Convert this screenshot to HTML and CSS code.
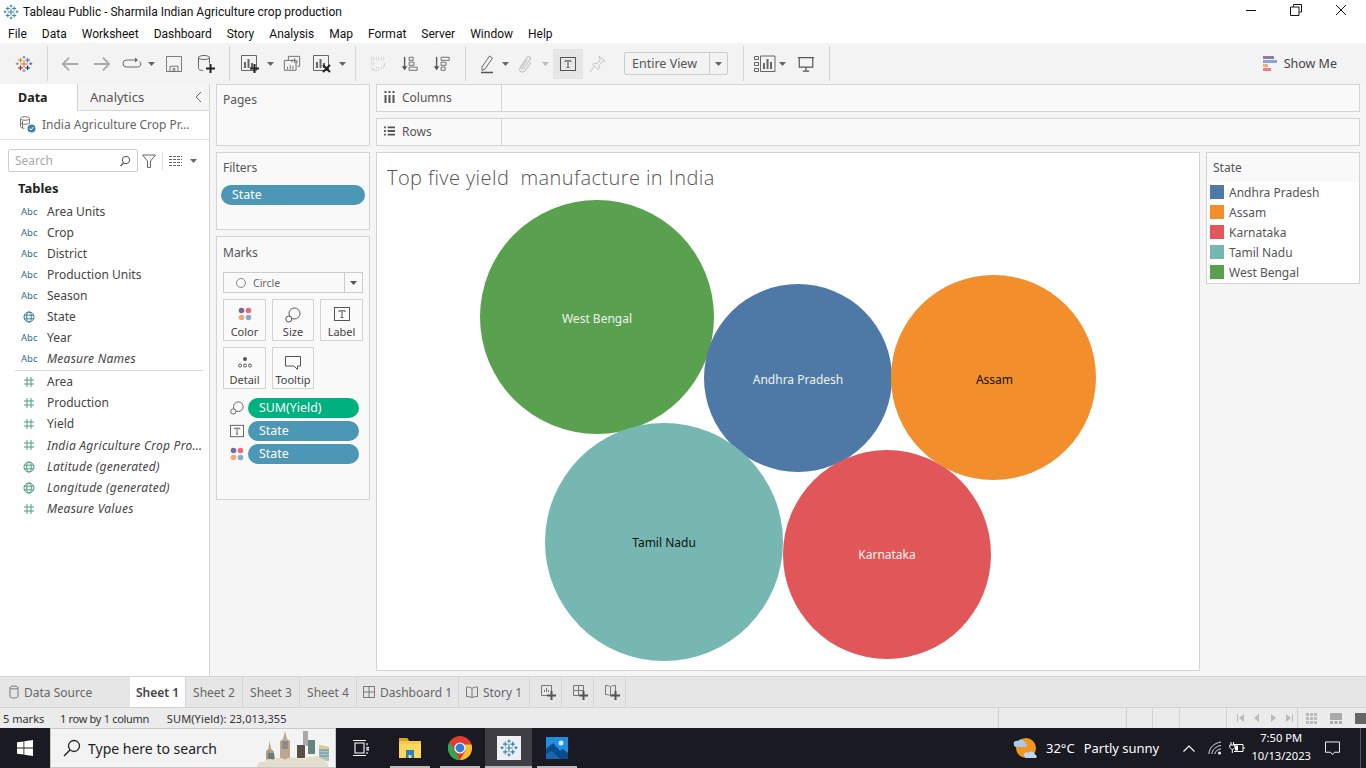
FILE: index.html
```html
<!DOCTYPE html>
<html lang="en">
<head>
<meta charset="utf-8">
<title>Tableau Public</title>
<link rel="stylesheet" href="styles.css">
</head>
<body>
<svg class="defs" width="0" height="0" aria-hidden="true">
  <defs>
    <symbol id="tlogo" viewBox="0 0 20 20"><g fill="none" stroke-width="1.300"><path d="M10 6v8M6 10h8" stroke="#e8762c"/><path d="M6 3.200v5M3.500 5.700h5" stroke="#e8862c" /><path d="M14 3.200v5M11.500 5.700h5" stroke="#59879b"/><path d="M6 11.800v5M3.500 14.300h5" stroke="#c72035"/><path d="M14 11.800v5M11.500 14.300h5" stroke="#1f447e"/><path d="M10 .8v3.400M8.300 2.500h3.400M10 15.800v3.400M8.300 17.500h3.400" stroke="#7099a6"/><path d="M2.500 8v3.400M.8 9.700h3.400" stroke="#7099a6"/><path d="M17.500 8v3.400M15.800 9.700h3.400" stroke="#5b6591"/></g></symbol>
    <symbol id="blogo" viewBox="0 0 20 20"><g fill="none" stroke="#3f86a8" stroke-width="1.300"><path d="M10 6v8M6 10h8M6 3.200v5M3.500 5.700h5M14 3.200v5M11.500 5.700h5M6 11.800v5M3.500 14.300h5M14 11.800v5M11.500 14.300h5M10 .8v3.400M8.300 2.500h3.400M10 15.800v3.400M8.300 17.500h3.400M2.500 8v3.400M.8 9.700h3.400M17.500 8v3.400M15.800 9.700h3.400"/></g></symbol>
    <symbol id="hash" viewBox="0 0 12 12"><path d="M4 1v10M8 1v10M1 4h10M1 8h10" fill="none" stroke="#4d9e80" stroke-width="1"/></symbol>
    <symbol id="globe" viewBox="0 0 12 12"><g fill="none" stroke="currentColor"><circle cx="6" cy="6" r="5"/><ellipse cx="6" cy="6" rx="2.300" ry="5"/><path d="M1 4.200h10M1 7.800h10"/></g></symbol>
    <symbol id="tbox" viewBox="0 0 16 14"><rect x=".5" y=".5" width="15" height="13" fill="none" stroke="#555"/><path d="M5 5V3.800h6V5M8 3.800v6.700M6.700 10.500h2.600" fill="none" stroke="#555"/></symbol>
    <symbol id="size" viewBox="0 0 16 16"><g fill="none" stroke="#555"><circle cx="9.500" cy="6.500" r="5.500"/><circle cx="3.800" cy="12" r="3" fill="#fafafa"/></g></symbol>
    <symbol id="dots" viewBox="0 0 14 14"><circle cx="3.500" cy="3.500" r="2.800" fill="#7a6a96"/><circle cx="10.500" cy="3.500" r="2.800" fill="#ef6a7a"/><circle cx="3.500" cy="10.500" r="2.800" fill="#f2a873"/><circle cx="10.500" cy="10.500" r="2.800" fill="#8aa9d0"/></symbol>
    <symbol id="caret" viewBox="0 0 8 4"><path d="M0 0h7L3.500 4z" fill="currentColor"/></symbol>
    <symbol id="plus" viewBox="0 0 9 9"><path d="M4.500 0v9M0 4.500h9" stroke="currentColor" stroke-width="2"/></symbol>
  </defs>
</svg>

<div class="window">
  <header class="titlebar">
    <svg class="title-logo"><use href="#blogo"/></svg>
    <span class="title-text">Tableau Public - Sharmila Indian Agriculture crop production</span>
    <div class="win-controls">
      <svg class="winbtn" viewBox="0 0 12 12"><path d="M1 6.500h10" stroke="#111"/></svg>
      <svg class="winbtn" viewBox="0 0 12 12"><path d="M3.500 2.500V.5h8v7.500h-2M.5 3h8.500v8.500H.5z" fill="none" stroke="#111"/></svg>
      <svg class="winbtn" viewBox="0 0 12 12"><path d="M1 1l10 10M11 1L1 11" stroke="#111"/></svg>
    </div>
  </header>
  <nav class="menubar">
    <span>File</span><span>Data</span><span>Worksheet</span><span>Dashboard</span><span>Story</span><span>Analysis</span><span>Map</span><span>Format</span><span>Server</span><span>Window</span><span>Help</span>
  </nav>

  <div class="toolbar">
    <div class="tb s47"><svg class="i18"><use href="#tlogo"/></svg></div>
    <i class="sep"></i>
    <div class="tb s6"></div>
    <div class="tb s32"><svg class="i18" viewBox="0 0 20 20"><path d="M19 10H2M9 3l-7 7 7 7" fill="none" stroke="#aaa" stroke-width="2"/></svg></div>
    <div class="tb s32"><svg class="i18" viewBox="0 0 20 20"><path d="M1 10h17M11 3l7 7-7 7" fill="none" stroke="#aaa" stroke-width="2"/></svg></div>
    <div class="tb s28"><svg class="i20" viewBox="0 0 20 20"><path d="M13 6H4.500a3 3 0 0 0 0 7h11a3 3 0 0 0 2-5.500" fill="none" stroke="#666"/><path d="M13 3.500L16 6l-3 2.500z" fill="#666"/></svg></div>
    <div class="tb s12 car"><svg class="c8"><use href="#caret"/></svg></div>
    <div class="tb s32"><svg class="i16" viewBox="0 0 18 18"><path d="M.5.5h17v17H.5zM4.500 17.500v-6h9v6M8 14h2v3.500H8z" fill="none" stroke="#666"/></svg></div>
    <div class="tb s32"><svg class="i20" viewBox="0 0 20 20"><g fill="none" stroke="#666"><ellipse cx="8" cy="3.500" rx="5.500" ry="2"/><path d="M2.500 3.500v11c0 1.200 2 2 4.500 2M13.500 3.500v6"/></g><use href="#plus" x="10" y="10" width="9" height="9" color="#222"/></svg></div>
    <div class="tb s7"></div>
    <i class="sep"></i>
    <div class="tb s7"></div>
    <div class="tb s26"><svg class="i20" viewBox="0 0 20 20"><path d="M1.500 1.500h15v15h-15z" fill="none" stroke="#666"/><path d="M5 8v6M8.500 5v9M12 9v5" stroke="#666" stroke-width="2"/><use href="#plus" x="10" y="10" width="9" height="9" color="#222"/></svg></div>
    <div class="tb s15 car"><svg class="c8"><use href="#caret"/></svg></div>
    <div class="tb s27"><svg class="i18" viewBox="0 0 20 20"><g fill="none" stroke="#666"><path d="M6 1.500h12.500v11H16M6 1.500V6"/><path d="M1.500 6h13v11h-13z" fill="#f3f3f3"/><path d="M5 13v3M8 11v5M11 12v4M10 8V5M13 9V3.500M15.500 9V6"/></g></svg></div>
    <div class="tb s34"><svg class="i20" viewBox="0 0 20 20"><path d="M1.500 1.500h15v15h-15z" fill="none" stroke="#666"/><path d="M5 8v6M8.500 5v9M12 9v5" stroke="#666" stroke-width="2"/><path d="M11 11l7 7M18 11l-7 7" stroke="#222" stroke-width="2"/></svg></div>
    <div class="tb s7 car"><svg class="c8"><use href="#caret"/></svg></div>
    <div class="tb s9"></div>
    <i class="sep"></i>
    <div class="tb s5"></div>
    <div class="tb s33"><svg class="i18" viewBox="0 0 20 20"><g fill="none" stroke="#c4c4c4"><path d="M2.500 2.500h3v3h-3zM8 2.500h3v3H8zM13.500 2.500h3v3h-3zM2.500 8h3v3h-3zM8 14h3v3H8z" stroke-dasharray="1 1"/><path d="M2.500 14c1 2.500 3 3 5 3M17.500 9c0 3-1.500 5-4.500 6"/></g></svg></div>
    <div class="tb s32"><svg class="i18" viewBox="0 0 20 20"><path d="M4 2v14" stroke="#555" stroke-width="1.500"/><path d="M1 12.500L4 17l3-4.500z" fill="#555"/><path d="M9 2.500h4.500v3.500H9zM9 8h5.500v3.500H9zM9 13.500h9V17H9z" fill="none" stroke="#666"/></svg></div>
    <div class="tb s32"><svg class="i18" viewBox="0 0 20 20"><path d="M4 2v14" stroke="#555" stroke-width="1.500"/><path d="M1 12.500L4 17l3-4.500z" fill="#555"/><path d="M9 2.500h9V6H9zM9 8h5.500v3.500H9zM9 13.500h4.500V17H9z" fill="none" stroke="#666"/></svg></div>
    <div class="tb s7"></div>
    <i class="sep"></i>
    <div class="tb s8"></div>
    <div class="tb s28"><svg class="i20" viewBox="0 0 20 20"><path d="M4 13L11.500 2l3 2L7 15l-3 1.500z" fill="none" stroke="#666"/><path d="M3 18.500h12" stroke="#555" stroke-width="1.500"/></svg></div>
    <div class="tb s7 car"><svg class="c8"><use href="#caret"/></svg></div>
    <div class="tb s33"><svg class="i20" viewBox="0 0 20 20"><path d="M5 12l6-8.500c1.500-2 4.500 0 3 2.200L8 14.500c-1 1.300-2.700 0-1.800-1.400l5-7.500" fill="none" stroke="#c4c4c4" stroke-width="1.200"/><path d="M5 12c-2 3-1.500 5.500.5 6s3.500-1 4.500-2.500l5-7" fill="none" stroke="#c4c4c4" stroke-width="1.200"/></svg></div>
    <div class="tb s7 car off"><svg class="c8"><use href="#caret"/></svg></div>
    <div class="tb s4"></div>
    <div class="tb s30 active"><svg class="i18-w"><use href="#tbox"/></svg></div>
    <div class="tb s28"><svg class="i20" viewBox="0 0 20 20"><path d="M12 2l6 5-2.500.5-3.500 4 .3 3-1 1-5.500-5 1-1 3 .3 3.500-4zM7.500 12L3 18" fill="none" stroke="#c4c4c4"/></svg></div>
    <div class="tb s13"></div>
    <div class="combo"><span class="combo-label">Entire View</span><span class="combo-arrow"><svg class="c8"><use href="#caret"/></svg></span></div>
    <div class="tb s15"></div>
    <i class="sep"></i>
    <div class="tb s7"></div>
    <div class="tb s28"><svg class="i20-w" viewBox="0 0 22 18"><g fill="none" stroke="#666"><path d="M.5 1.500h4v3h-4zM.5 7.500h4v3h-4zM.5 13.500h4v3h-4zM6.500 1h14.500v15.500H6.500z"/></g><path d="M10 8v6M13.500 4v10M17 7v7" stroke="#666" stroke-width="2"/></svg></div>
    <div class="tb s8 car"><svg class="c8"><use href="#caret"/></svg></div>
    <div class="tb s37"><svg class="i18" viewBox="0 0 20 20"><path d="M1 3h18M2.500 3v10.500h15V3M10 13.500V18M6.500 18h7" fill="none" stroke="#555" stroke-width="1.300"/></svg></div>
    <div class="tb s5"></div>
    <i class="sep"></i>
    <div class="showme">
      <svg class="showme-icon" viewBox="0 0 14 15"><rect width="11" height="3" fill="#8e7ba0"/><rect y="4" width="14" height="3" fill="#86a8cc"/><rect y="8" width="5" height="3" fill="#f4ab76"/><rect y="12" width="8" height="3" fill="#f47a86"/></svg>
      <span>Show Me</span>
    </div>
  </div>

  <main class="workspace">
    <aside class="datapane">
      <div class="pane-tabs">
        <div class="pane-tab on">Data</div>
        <div class="pane-tab off">Analytics<svg class="collapse" viewBox="0 0 7 12"><path d="M6 1L1 6l5 5" fill="none" stroke="#666"/></svg></div>
      </div>
      <div class="source">
        <svg class="source-icon" viewBox="0 0 17 17"><g fill="none" stroke="#777"><ellipse cx="6" cy="2.500" rx="4.500" ry="1.800"/><path d="M1.500 2.500v8c0 1 2 1.800 4 1.800M10.500 2.500v5M3.500 5v7M1.500 6.500c0 1 2 1.800 4.500 1.800s4.500-.8 4.500-1.800"/></g><circle cx="12.500" cy="12.500" r="4" fill="#3c84a8"/><path d="M10.500 12.500l1.500 1.500 2.500-3" fill="none" stroke="#fff"/></svg>
        <span>India Agriculture Crop Pr...</span>
      </div>
      <div class="searchrow">
        <div class="search"><span>Search</span><svg class="i12" viewBox="0 0 12 12"><circle cx="7" cy="5" r="3.700" fill="none" stroke="#555"/><path d="M4.500 8L1.500 11" stroke="#555" stroke-width="1.300"/></svg></div>
        <svg class="filter-icon" viewBox="0 0 14 14"><path d="M.5 1h13L8.500 7v6.500h-3V7z" fill="none" stroke="#666"/></svg>
        <i class="mini-sep"></i>
        <svg class="grid-icon" viewBox="0 0 13 10"><path d="M0 .5h13M0 3.500h13M0 6.500h13M0 9.500h13" stroke="#666" stroke-dasharray="3 1"/></svg>
        <svg class="c8 grid-caret"><use href="#caret"/></svg>
      </div>
      <div class="tables-h">Tables</div>
      <ul class="fields">
        <li><b class="abc">Abc</b>Area Units</li>
        <li><b class="abc">Abc</b>Crop</li>
        <li><b class="abc">Abc</b>District</li>
        <li><b class="abc">Abc</b>Production Units</li>
        <li><b class="abc">Abc</b>Season</li>
        <li><svg class="fld blue"><use href="#globe"/></svg>State</li>
        <li><b class="abc">Abc</b>Year</li>
        <li class="it"><b class="abc">Abc</b>Measure Names</li>
      </ul>
      <ul class="fields measures">
        <li><svg class="fld"><use href="#hash"/></svg>Area</li>
        <li><svg class="fld"><use href="#hash"/></svg>Production</li>
        <li><svg class="fld"><use href="#hash"/></svg>Yield</li>
        <li class="it"><svg class="fld"><use href="#hash"/></svg>India Agriculture Crop Pro...</li>
        <li class="it"><svg class="fld green"><use href="#globe"/></svg>Latitude (generated)</li>
        <li class="it"><svg class="fld green"><use href="#globe"/></svg>Longitude (generated)</li>
        <li class="it"><svg class="fld"><use href="#hash"/></svg>Measure Values</li>
      </ul>
    </aside>

    <section class="cards-col">
      <div class="card pages"><h3>Pages</h3></div>
      <div class="card filters"><h3>Filters</h3><div class="pill blue-pill wide">State</div></div>
      <div class="card marks">
        <h3>Marks</h3>
        <div class="mark-select">
          <span class="ring"></span><span class="mark-name">Circle</span>
          <span class="mark-arrow"><svg class="c8"><use href="#caret"/></svg></span>
        </div>
        <div class="mark-grid">
          <div class="mbtn"><svg class="i14"><use href="#dots"/></svg><span>Color</span></div>
          <div class="mbtn"><svg class="i16"><use href="#size"/></svg><span>Size</span></div>
          <div class="mbtn"><svg class="i18-w"><use href="#tbox"/></svg><span>Label</span></div>
          <div class="mbtn"><svg class="i14" viewBox="0 0 14 14"><circle cx="7" cy="4" r="2" fill="#555"/><g fill="none" stroke="#555"><circle cx="2" cy="10.500" r="1.500"/><circle cx="7" cy="10.500" r="1.500"/><circle cx="12" cy="10.500" r="1.500"/></g></svg><span>Detail</span></div>
          <div class="mbtn"><svg class="i16" viewBox="0 0 16 16"><path d="M.5 1.500h15v9.500h-3v3.500L9 11H.5z" fill="none" stroke="#555"/></svg><span>Tooltip</span></div>
        </div>
        <div class="enc"><svg class="i14"><use href="#size"/></svg><div class="pill green-pill">SUM(Yield)</div></div>
        <div class="enc"><svg class="i14"><use href="#tbox"/></svg><div class="pill blue-pill">State</div></div>
        <div class="enc"><svg class="i14"><use href="#dots"/></svg><div class="pill blue-pill">State</div></div>
      </div>
    </section>

    <section class="view">
      <div class="shelf"><div class="shelf-label"><svg class="shelf-icon" viewBox="0 0 11 12"><path d="M1.500 0v2M5.500 0v2M9.500 0v2" stroke="#555" stroke-width="2"/><path d="M1.500 4v8M5.500 4v8M9.500 4v8" stroke="#555" stroke-width="2"/></svg>Columns</div></div>
      <div class="shelf"><div class="shelf-label"><svg class="shelf-icon" viewBox="0 0 12 11"><path d="M0 1.500h2M0 5.500h2M0 9.500h2M4 1.500h8M4 5.500h8M4 9.500h8" stroke="#555" stroke-width="2"/></svg>Rows</div></div>
      <div class="viz-row">
        <div class="viz">
          <h1 class="viz-title">Top five yield  manufacture in India</h1>
          <div class="bubble wb">West Bengal</div>
          <div class="bubble ap">Andhra Pradesh</div>
          <div class="bubble as">Assam</div>
          <div class="bubble tn">Tamil Nadu</div>
          <div class="bubble ka">Karnataka</div>
        </div>
        <aside class="legend">
          <div class="legend-h">State</div>
          <ul>
            <li><i class="sw c-ap"></i>Andhra Pradesh</li>
            <li><i class="sw c-as"></i>Assam</li>
            <li><i class="sw c-ka"></i>Karnataka</li>
            <li><i class="sw c-tn"></i>Tamil Nadu</li>
            <li><i class="sw c-wb"></i>West Bengal</li>
          </ul>
        </aside>
      </div>
    </section>
  </main>

  <div class="tabs">
    <div class="tab ds"><svg class="tab-i" viewBox="0 0 10 14"><g fill="none" stroke="#777"><ellipse cx="5" cy="2.500" rx="4" ry="1.500"/><path d="M1 2.500v9c0 .8 1.800 1.500 4 1.500s4-.7 4-1.500v-9"/></g></svg>Data Source</div>
    <div class="tab cur t56">Sheet 1</div>
    <div class="tab t57">Sheet 2</div>
    <div class="tab t57">Sheet 3</div>
    <div class="tab t57">Sheet 4</div>
    <div class="tab t102"><svg class="tab-i w12" viewBox="0 0 12 12"><path d="M.5.5h11v11H.5zM6 .5v11M.5 6h11" fill="none" stroke="#777"/></svg>Dashboard 1</div>
    <div class="tab t71"><svg class="tab-i w12" viewBox="0 0 12 12"><path d="M6 2.500C5 1.500 3 1 .5 1v9.500c2.500 0 4.500.5 5.500 1.500 1-1 3-1.500 5.500-1.500V1C9 1 7 1.500 6 2.500zM6 2.500V12" fill="none" stroke="#777"/></svg>Story 1</div>
    <div class="tab t32"><svg class="add-i" viewBox="0 0 15 15"><path d="M.5.5h10v10H.5z" fill="none" stroke="#777"/><path d="M3.500 7V5M5.500 7V3M7.500 7V5" stroke="#777"/><use href="#plus" x="6" y="6" width="9" height="9" color="#555"/></svg></div>
    <div class="tab t32"><svg class="add-i" viewBox="0 0 15 15"><path d="M.5.5h10v10H.5zM5.500.5v10M.5 5.500h10" fill="none" stroke="#777"/><use href="#plus" x="6" y="6" width="9" height="9" color="#555"/></svg></div>
    <div class="tab t32"><svg class="add-i" viewBox="0 0 15 15"><path d="M5.500 2C4.500 1 3 .5.500.5v9c2.500 0 4 .5 5 1.500 1-1 2.500-1.500 5-1.500v-9C8 .5 6.500 1 5.500 2zM5.500 2v9" fill="none" stroke="#777"/><use href="#plus" x="6" y="6" width="9" height="9" color="#555"/></svg></div>
  </div>

  <footer class="status">
    <span class="st1">5 marks</span><span class="st2">1 row by 1 column</span><span class="st3">SUM(Yield): 23,013,355</span>
    <i class="st-sep first"></i><i class="st-sep s128"></i><i class="st-sep s26w"></i><i class="st-sep s27w"></i><i class="st-sep s47w"></i>
    <div class="nav">
      <svg class="nav-i" viewBox="0 0 8 8"><path d="M7 0v8L2 4zM0 0h1v8H0z" fill="#bbb"/></svg>
      <svg class="nav-i" viewBox="0 0 8 8"><path d="M6 0v8L1 4z" fill="#bbb"/></svg>
      <svg class="nav-i" viewBox="0 0 8 8"><path d="M2 0v8l5-4z" fill="#bbb"/></svg>
      <svg class="nav-i" viewBox="0 0 8 8"><path d="M1 0v8l5-4zM7 0h1v8H7z" fill="#bbb"/></svg>
    </div>
    <i class="st-sep nav-end"></i>
    <div class="views">
      <svg class="view-i" viewBox="0 0 11 11"><path d="M0 0h3v3H0zM4 0h3v3H4zM8 0h3v3H8zM0 4h3v3H0zM4 4h3v3H4zM8 4h3v3H8zM0 8h3v3H0zM4 8h3v3H4zM8 8h3v3H8z" fill="#bbb"/></svg>
      <svg class="view-i w12" viewBox="0 0 12 11"><path d="M0 0h12v7H0zM0 8h3v3H0zM4.500 8h3v3h-3zM9 8h3v3H9z" fill="#aaa"/></svg>
      <svg class="view-i" viewBox="0 0 11 11"><path d="M0 0h11v11H0z" fill="#666"/></svg>
    </div>
  </footer>

  <div class="taskbar">
    <div class="start"><svg class="win-logo" viewBox="0 0 16 16"><path d="M0 2.300l6.500-.9v6.200H0zM7.300 1.300L16 0v7.600H7.300zM0 8.400h6.500v6.200L0 13.700zM7.300 8.400H16V16l-8.700-1.200z" fill="#fff"/></svg></div>
    <div class="tsearch">
      <svg class="ts-i" viewBox="0 0 18 18"><circle cx="11" cy="7" r="5.500" fill="none" stroke="#222" stroke-width="1.300"/><path d="M7 11l-6 6" stroke="#222" stroke-width="1.500"/></svg>
      <span>Type here to search</span>
      <svg class="skyline" viewBox="0 0 86 40">
        <path d="M17 33V24l2.500-2 1-8 1.500 8 2.500 2 2 9z" fill="#b89a7c"/><path d="M19 26h6v6h-6z" fill="#5f7f80"/>
        <path d="M31 34V14l3-2 2-8 2 8 3 2v20z" fill="#bba78f"/><path d="M33 14h6v8h-6z" fill="#8f8a84"/>
        <path d="M48 31V18h8v13z" fill="#5a4f47"/>
        <path d="M54 18V4h5v15z" fill="#a9a9a9"/>
        <path d="M59 27V13h7v14z" fill="#64857c"/>
        <path d="M70 34V18l10 2v14z" fill="#a9c4c4"/><path d="M70 23h10M70 26h10M70 29h10" stroke="#6e8f92"/><path d="M70 18l10 2v2H70z" fill="#e2c98f"/>
        <path d="M8 40c0-4 4-6 7-5 2-3 6-4 9-2 3-3 9-3 12 0 3-3 9-3 12-1 3-1 5-1 7 1 2-3 6-4 9-3 3-2 7-1 9 2 3 0 6 2 6 8z" fill="#e4dccd"/>
      </svg>
    </div>
    <div class="tk w48"><svg class="tv-i" viewBox="0 0 16 16"><path d="M2 3h9v10H2zM0 .5h13M0 15.500h13M14 3v2.500M14 7.500h2V10h-2zM14 12v2" fill="none" stroke="#fff" stroke-width="1.100"/></svg></div>
    <div class="tk app"><svg class="app-i" viewBox="0 0 22 22"><path d="M0 1h8l2 3h12v17H0z" fill="#f2c94c"/><path d="M0 7h22v14H0z" fill="#fbd75b"/><path d="M7 13h8v8h-2.500v-3h-3v3H7z" fill="#2a7fc1"/><path d="M0 1h8l2 3H0z" fill="#d9a520"/></svg></div>
    <div class="tk app"><svg class="app-i big" viewBox="0 0 24 24"><circle cx="12" cy="12" r="12" fill="#e33b2e"/><path d="M12 24A12 12 0 0 1 1.600 6L8 17l4 7z" fill="#2da94f"/><path d="M23.500 8.500A12 12 0 0 1 12 24l5.500-9.500-1-6z" fill="#fbc02d"/><circle cx="12" cy="12" r="5.600" fill="#fff"/><circle cx="12" cy="12" r="4.400" fill="#2f7de1"/></svg></div>
    <div class="tk app cur-app"><svg class="tab-tile" viewBox="0 0 26 26"><rect width="26" height="26" fill="#eef1f4"/><svg x="3" y="3" width="20" height="20"><use href="#blogo"/></svg></svg></div>
    <div class="tk app"><svg class="app-i" viewBox="0 0 22 22"><rect width="22" height="22" fill="#1f8fe0"/><path d="M0 22V12l7-6 7 8 3-2 5 4v6z" fill="#0d4a8a"/><path d="M0 22v-5l6-3 8 8z" fill="#1668b0"/><circle cx="15" cy="6" r="2.500" fill="#cfe9ff"/></svg></div>
    <div class="tray">
      <svg class="weather" viewBox="0 0 26 24"><circle cx="14" cy="12" r="10" fill="#f0951e"/><path d="M2 9a3 3 0 0 1 4-4 4 4 0 0 1 7 2 2 2 0 0 1 0 4H4a2 2 0 0 1-2-2z" fill="#a9cbea"/><path d="M13 21a2.500 2.500 0 0 1 3-4 4 4 0 0 1 7 1.500 2 2 0 0 1 1 3.500H14a2 2 0 0 1-1-1z" fill="#bcd8f0"/></svg>
      <span class="temp">32°C</span><span class="cond">Partly sunny</span>
      <svg class="chev" viewBox="0 0 12 7"><path d="M.5 6.500L6 1l5.500 5.500" fill="none" stroke="#fff" stroke-width="1.100"/></svg>
      <svg class="wifi" viewBox="0 0 14 14"><g fill="none" stroke="#ddd"><path d="M1 13C1 7 6 2 13 1M4 13c0-4 4-8 9-8.500M7 13c0-2.500 3-5 6-5"/></g><circle cx="11.500" cy="12" r="1.500" fill="#fff"/></svg>
      <svg class="batt" viewBox="0 0 16 12"><path d="M5 2.500h9v7H5M15 5v2" fill="none" stroke="#fff"/><path d="M2 0v3M4.500 0v3M.8 3h5v2.500l-2 2h-1l-2-2zM3.300 7.500V11" fill="none" stroke="#fff"/><path d="M6 3.500h3v5H6z" fill="#fff"/></svg>
      <div class="clock"><span>7:50 PM</span><span>10/13/2023</span></div>
      <svg class="notif" viewBox="0 0 16 15"><path d="M.5.5h15v11H10l-2 2.500-2-2.500H.5z" fill="none" stroke="#fff"/></svg>
      <i class="desk"></i>
    </div>
  </div>
</div>
</body>
</html>
```

FILE: styles.css
```css
* { box-sizing: border-box; }
html, body { margin: 0; padding: 0; }
body { width: 1366px; height: 768px; overflow: hidden; font-family: "Noto Sans", "Open Sans", sans-serif; font-size: 12px; color: #333; background: #fff; }
ul { list-style: none; margin: 0; padding: 0; }
h1, h3 { margin: 0; font-weight: 400; }
.defs { position: absolute; }
svg { display: block; flex: none; }
.window { display: flex; flex-direction: column; width: 1366px; height: 768px; }

.titlebar { height: 23px; display: flex; align-items: center; background: #fff; padding-left: 3px; }
.title-logo { width: 16px; height: 16px; margin-right: 4px; }
.title-text { font-family: Roboto, sans-serif; font-size: 12px; color: #111; }
.win-controls { margin-left: auto; display: flex; margin-top: -3px; }
.winbtn { width: 12px; height: 12px; margin-left: 33px; }
.win-controls .winbtn:last-child { margin-right: 19px; }
.menubar { height: 20px; display: flex; align-items: center; gap: 15px; padding: 1px 0 0 8px; background: #fff; color: #111; font-family: Roboto, sans-serif; font-size: 12px; }

.toolbar { height: 41px; display: flex; align-items: center; background: #f3f3f3; }
.tb { height: 30px; display: flex; align-items: center; justify-content: center; flex: none; }
.sep { width: 1px; height: 35px; background: #d4d4d4; flex: none; }
.car { color: #666; }
.car.off { color: #bbb; }
.s4 { width: 4px; } .s5 { width: 5px; } .s6 { width: 6px; } .s7 { width: 7px; } .s8 { width: 8px; } .s9 { width: 9px; } .s12 { width: 12px; } .s13 { width: 13px; } .s15 { width: 15px; }
.s26 { width: 26px; } .s27 { width: 27px; } .s28 { width: 28px; } .s30 { width: 30px; } .s32 { width: 32px; } .s33 { width: 33px; } .s34 { width: 34px; } .s37 { width: 37px; } .s47 { width: 47px; }
.i12 { width: 12px; height: 12px; } .i14 { width: 14px; height: 14px; } .i16 { width: 16px; height: 16px; } .i18 { width: 18px; height: 18px; }
.i20 { width: 20px; height: 20px; } .i20-w { width: 22px; height: 18px; } .i18-w { width: 16px; height: 14px; }
.c8 { width: 8px; height: 4px; }
.active { background: #e6e6e6; }
.combo { width: 104px; height: 23px; display: flex; border: 1px solid #ccc; border-radius: 2px; background: #f3f3f3; color: #555; font-size: 12.500px; flex: none; }
.combo-label { flex: 1; display: flex; align-items: center; padding-left: 7px; }
.combo-arrow { width: 18px; border-left: 1px solid #ccc; display: flex; align-items: center; justify-content: center; color: #666; }
.showme { margin-left: auto; margin-right: 29px; display: flex; align-items: center; gap: 7px; font-size: 12.500px; color: #444; }
.showme-icon { width: 14px; height: 15px; }

.workspace { height: 593px; display: flex; background: #f5f5f5; border-bottom: 1px solid #d4d4d4; }
.datapane { width: 210px; background: #fff; border-right: 1px solid #d4d4d4; flex: none; }
.pane-tabs { display: flex; height: 27px; }
.pane-tab { display: flex; align-items: center; font-size: 12.500px; }
.pane-tab.on { width: 77px; font-weight: 700; padding-left: 18px; color: #222; }
.pane-tab.off { flex: 1; padding-left: 12px; background: #f5f5f5; border-left: 1px solid #d4d4d4; border-bottom: 1px solid #d4d4d4; color: #555; position: relative; font-size: 13px; }
.collapse { width: 7px; height: 12px; margin-left: auto; margin-right: 7px; }
.source { height: 29px; display: flex; align-items: center; padding: 0 0 2px 19px; gap: 6px; color: #666; border-bottom: 1px solid #e0e0e0; }
.source-icon { width: 17px; height: 17px; }
.searchrow { height: 39px; display: flex; align-items: center; padding-left: 8px; padding-top: 2px; }
.search { width: 130px; height: 23px; border: 1px solid #ccc; border-radius: 2px; display: flex; align-items: center; justify-content: space-between; padding: 0 6px; color: #aaa; }
.filter-icon { width: 14px; height: 14px; margin-left: 4px; }
.mini-sep { width: 1px; height: 18px; background: #ddd; margin: 0 6px; }
.grid-icon { width: 13px; height: 10px; }
.grid-caret { margin-left: 8px; color: #666; }
.tables-h { height: 16px; line-height: 16px; padding-left: 18px; font-weight: 700; font-size: 13px; color: #222; margin-top: 1px; margin-bottom: 5px; }
.fields { padding-left: 15px; margin-right: 6px; }
.fields li { height: 21px; display: flex; align-items: center; color: #444; white-space: nowrap; }
.fields li.it { font-style: italic; letter-spacing: .25px; }
.fields.measures { margin-top: 1px; }
.fields.measures li:first-child { border-top: 1px solid #d9d9d9; height: 22px; }
.fields.measures li:nth-child(4) { height: 22px; }
.abc { width: 32px; padding-left: 6px; flex: none; font-weight: 400; font-size: 9.500px; color: #2f6f8a; font-style: normal; letter-spacing: 0; }
.fld { width: 12px; height: 12px; margin-left: 8px; margin-right: 12px; }
.blue { color: #3d7d96; }
.green { color: #4d9e80; }

.cards-col { width: 166px; padding: 0 6px; flex: none; display: flex; flex-direction: column; gap: 6px; }
.card { width: 154px; background: #f9f9f9; border: 1px solid #d4d4d4; padding: 7px 4px 0 4px; }
.card h3 { font-size: 12px; color: #555; padding-left: 2px; height: 18px; line-height: 16px; }
.pages { height: 62px; }
.filters { height: 78px; }
.filters h3 { margin-bottom: 7px; }
.filters .pill { padding-bottom: 2px; }
.marks { height: 264px; padding: 8px 6px 0 6px; }
.marks h3 { padding-left: 0; margin-bottom: 9px; }
.pill { height: 20px; border-radius: 10px; color: #fff; display: flex; align-items: center; padding: 0 0 1px 11px; font-size: 12.400px; flex: 1; }
.blue-pill { background: #4b97b5; }
.green-pill { background: #00b180; }
.mark-select { height: 21px; border: 1px solid #ccc; background: #f9f9f9; display: flex; align-items: center; font-size: 10.500px; color: #666; margin-bottom: 6px; width: 140px; }
.ring { width: 10px; height: 10px; border: 1px solid #888; border-radius: 50%; margin-left: 12px; }
.mark-name { margin-left: 7px; }
.mark-arrow { margin-left: auto; width: 18px; height: 100%; border-left: 1px solid #ccc; display: flex; align-items: center; justify-content: center; color: #555; }
.mark-grid { display: grid; grid-template-columns: 43px 42px 43px; column-gap: 6px; row-gap: 6px; margin-bottom: 9px; }
.mbtn { height: 42px; border: 1px solid #d4d4d4; background: #fafafa; display: flex; flex-direction: column; align-items: center; justify-content: flex-start; padding-top: 7px; font-size: 11px; color: #444; }
.mbtn span { margin-top: auto; margin-bottom: 1px; line-height: 15px; }
.enc { display: flex; align-items: center; gap: 4px; height: 20px; margin-bottom: 3px; margin-right: 4px; padding-left: 7px; }

.view { flex: 1; padding-right: 6px; display: flex; flex-direction: column; gap: 6px; min-width: 0; }
.shelf { height: 28px; background: #f9f9f9; border: 1px solid #d4d4d4; display: flex; flex: none; }
.shelf-label { width: 125px; border-right: 1px solid #d4d4d4; display: flex; align-items: center; color: #555; padding: 0 0 2px 7px; gap: 7px; }
.shelf-icon { width: 11px; height: 12px; }
.viz-row { display: flex; gap: 6px; flex: none; }
.viz { position: relative; width: 824px; height: 519px; background: #fff; border: 1px solid #d4d4d4; overflow: hidden; }
.viz-title { position: absolute; left: 10px; top: 11px; font-size: 20px; font-weight: 300; letter-spacing: .42px; color: #555; white-space: pre; font-family: "Open Sans", sans-serif; line-height: 28px; }
.bubble { position: absolute; border-radius: 50%; display: flex; align-items: center; justify-content: center; font-size: 12px; color: #eef2ee; padding-top: 1px; }
.wb { left: 103px; top: 47px; width: 234px; height: 234px; background: #59a14f; padding-top: 3px; }
.ap { left: 327px; top: 131px; width: 188px; height: 188px; background: #4e79a7; padding-top: 3px; }
.as { left: 514px; top: 122px; width: 205px; height: 205px; background: #f28e2b; color: #111; padding: 3px 0 0 2px; }
.ka { left: 406px; top: 297px; width: 208px; height: 209px; background: #e15759; padding-top: 0; }
.tn { left: 168px; top: 270px; width: 238px; height: 238px; background: #76b7b2; color: #111; }
.legend { width: 154px; height: 132px; background: #fff; border: 1px solid #d4d4d4; }
.legend-h { height: 29px; display: flex; align-items: center; padding-left: 6px; background: #f9f9f9; color: #555; }
.legend ul { padding: 0 0 0 3px; }
.legend li { height: 20px; display: flex; align-items: center; color: #555; font-size: 12px; }
.sw { width: 14px; height: 14px; margin-right: 5px; flex: none; }
.c-ap { background: #4e79a7; } .c-as { background: #f28e2b; } .c-ka { background: #e15759; } .c-tn { background: #76b7b2; } .c-wb { background: #59a14f; }

.tabs { height: 31px; display: flex; background: #e6e6e6; border-bottom: 1px solid #d4d4d4; }
.tab { height: 30px; display: flex; align-items: center; justify-content: center; gap: 5px; color: #666; border-right: 1px solid #d4d4d4; flex: none; white-space: nowrap; }
.tab.ds { width: 130px; justify-content: flex-start; padding-left: 9px; border-right: 0; }
.tab.cur { background: #fff; font-weight: 600; color: #444; }
.t56 { width: 56px; } .t57 { width: 57px; } .t102 { width: 102px; } .t71 { width: 71px; }
.t32 { width: 32px; padding-left: 5px; }
.tab-i { width: 10px; height: 14px; }
.tab-i.w12 { width: 12px; height: 12px; }
.add-i { width: 15px; height: 15px; }

.status { height: 20px; position: relative; display: flex; align-items: center; background: #ebebeb; font-size: 11px; color: #333; }
.st1 { margin-left: 3px; width: 57px; } .st2 { width: 107px; letter-spacing: -.3px; white-space: nowrap; } .st3 { width: 832px; letter-spacing: .1px; }
.st-sep { width: 1px; height: 20px; background: #d4d4d4; flex: none; }
.s128 { margin-left: 127px; } .s26w { margin-left: 25px; } .s27w { margin-left: 26px; } .s47w { margin-left: 46px; }
.nav { display: flex; width: 70px; gap: 8px; padding-left: 10px; }
.nav-i { width: 8px; height: 8px; }
.views { display: flex; align-items: center; gap: 13px; padding-left: 8px; }
.view-i { width: 11px; height: 11px; }
.view-i.w12 { width: 12px; }

.taskbar { height: 40px; display: flex; align-items: center; background: #1a1a22; color: #fff; }
.start { width: 50px; display: flex; justify-content: center; }
.win-logo { width: 16px; height: 16px; }
.tsearch { width: 286px; height: 40px; background: #f3f3f3; display: flex; align-items: center; position: relative; color: #222; font-size: 14px; padding-left: 12px; gap: 7px; border: 1px solid #c8c8c8; }
.ts-i { width: 18px; height: 18px; }
.skyline { position: absolute; right: 0; bottom: 0; width: 86px; height: 40px; }
.tk { height: 40px; display: flex; align-items: center; justify-content: center; flex: none; }
.w48 { width: 49px; }
.tv-i { width: 16px; height: 16px; }
.app { width: 50px; position: relative; }
.app::after { content: ""; position: absolute; left: 5px; right: 5px; bottom: 0; height: 2px; background: #bbb; }
.cur-app { width: 47px; background: #3e3e44; }
.cur-app::after { left: 0; right: 0; }
.app-i { width: 22px; height: 22px; }
.app-i.big { width: 24px; height: 24px; }
.tab-tile { width: 24px; height: 24px; }
.tray { flex: 1; display: flex; align-items: center; height: 40px; position: relative; padding-left: 430px; }
.weather { width: 26px; height: 24px; margin-right: 8px; }
.temp { font-size: 13px; margin-right: 9px; }
.cond { font-size: 13px; margin-right: 24px; white-space: nowrap; }
.chev { width: 12px; height: 7px; margin-right: 13px; }
.wifi { width: 14px; height: 14px; margin-right: 7px; }
.batt { width: 16px; height: 12px; margin-right: 6px; }
.clock { display: flex; flex-direction: column; align-items: center; font-size: 11.200px; line-height: 18px; width: 60px; margin-top: -2px; }
.notif { width: 15px; height: 15px; margin-left: 14px; }
.desk { position: absolute; right: 5px; top: 0; width: 1px; height: 40px; background: #55555a; }
```
